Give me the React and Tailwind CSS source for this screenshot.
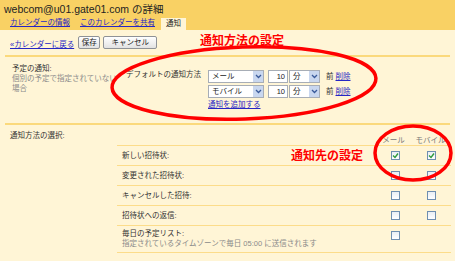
import React from 'react';

const jp = "font-['Liberation_Sans','Noto_Sans_CJK_JP',sans-serif]";

function Chevron() {
  return (
    <svg width="7" height="5" viewBox="0 0 7 5">
      <path d="M1 1 L3.5 3.5 L6 1" fill="none" stroke="#3a5a9a" strokeWidth="1.3" />
    </svg>
  );
}

function SelectBox({ value, width }) {
  return (
    <div className={`flex h-[13px] items-stretch border border-[#a7adb6] bg-white ${width}`}>
      <span className="flex-1 pl-[3px] text-[7.5px] leading-[11px] text-[#222]">{value}</span>
      <span className="flex w-[10px] items-center justify-center bg-[#c9d7ef]">
        <Chevron />
      </span>
    </div>
  );
}

function Checkbox({ checked }) {
  return (
    <div className="flex h-[9px] w-[9px] items-center justify-center border border-[#6f8fb0] bg-gradient-to-b from-[#e9eef4] to-[#ffffff]">
      {checked && (
        <svg width="7" height="7" viewBox="0 0 7 7">
          <path d="M1 3.5 L3 5.5 L6 1.5" fill="none" stroke="#2f9a3c" strokeWidth="1.4" />
        </svg>
      )}
    </div>
  );
}

const rows = [
  { label: '新しい招待状:', checked: true },
  { label: '変更された招待状:' },
  { label: 'キャンセルした招待:' },
  { label: '招待状への返信:' },
];

export default function App() {
  return (
    <div className={`relative h-[261px] w-[455px] overflow-hidden bg-[#fff5d6] text-[#333] ${jp}`}>
      {/* header */}
      <div className="h-[30px] bg-[#f9d164] pl-[4px]">
        <div className="pt-[3px] text-[10.5px] leading-[13px] text-[#222]">webcom@u01.gate01.com の詳細</div>
        <div className="mt-[2px] flex h-[12px] items-end pl-[6px] text-[7.5px]">
          <a className="mb-[2px] text-[#2626c4] underline">カレンダーの情報</a>
          <a className="mb-[2px] ml-[10px] text-[#2626c4] underline">このカレンダーを共有</a>
          <span className="ml-[6px] flex h-[12px] items-center bg-[#fff5d6] px-[5px] text-[#222]">通知</span>
        </div>
      </div>

      {/* toolbar */}
      <div className="flex h-[25px] items-center pl-[10px] text-[7.5px]">
        <a className="mt-[4px] text-[#2626c4] underline">«カレンダーに戻る</a>
        <button className="ml-[4px] h-[13px] w-[22px] rounded-[2px] border border-[#8f9296] bg-gradient-to-b from-[#ffffff] to-[#e2e2e2] text-[7.5px] leading-[11px] text-[#222]">保存</button>
        <button className="ml-[3px] h-[13px] w-[54px] rounded-[2px] border border-[#8f9296] bg-gradient-to-b from-[#ffffff] to-[#e2e2e2] text-[7.5px] leading-[11px] text-[#222]">キャンセル</button>
      </div>
      <div className="mx-[5px] h-[2px] bg-[#fbd97c]" />

      {/* default notification */}
      <div className="flex h-[66px] text-[7.5px]">
        <div className="w-[126px] whitespace-nowrap pl-[12px] pt-[6px]">
          <div className="leading-[11px] text-[#333]">予定の通知:</div>
          <div className="leading-[10px] text-[#8a8a8a]">個別の予定で指定されていない<br />場合</div>
        </div>
        <div className="w-[82px] whitespace-nowrap pt-[12px] leading-[11px] text-[#333]">デフォルトの通知方法</div>
        <div className="pt-[13px]">
          {['メール', 'モバイル'].map((v, i) => (
            <div key={v} className={`flex items-center ${i ? 'mt-[2px]' : ''}`}>
              <SelectBox value={v} width="w-[56px]" />
              <div className="ml-[4px] h-[13px] w-[20px] border border-[#a7adb6] bg-white pr-[2px] text-right text-[7.5px] leading-[11px] text-[#222]">10</div>
              <div className="ml-[1px]"><SelectBox value="分" width="w-[31px]" /></div>
              <span className="ml-[6px] text-[#333]">前</span>
              <a className="ml-[2px] text-[#2626c4] underline">削除</a>
            </div>
          ))}
          <a className="mt-[2px] block leading-[10px] text-[#2626c4] underline">通知を追加する</a>
        </div>
      </div>
      <div className="mx-[5px] h-[2px] bg-[#fbd97c]" />

      {/* notification choice */}
      <div className="flex h-[20px] text-[7.5px]">
        <div className="flex-1 pl-[10px] pt-[5px] text-[#333]">通知方法の選択:</div>
        <div className="flex pr-[6px] pt-[10px] text-[#777]">
          <span className="w-[37px] text-center">メール</span>
          <span className="w-[37px] text-center">モバイル</span>
        </div>
      </div>
      <div className="ml-[117px] mr-[4px] text-[7.5px]">
        {rows.map((r) => (
          <div key={r.label} className="flex h-[20px] items-center border-t-[1.5px] border-[#fcdc8a]">
            <span className="flex-1 pl-[5px] text-[#333]">{r.label}</span>
            <div className="flex w-[37px] justify-center"><Checkbox checked={r.checked} /></div>
            <div className="flex w-[37px] justify-center pr-[2px]"><Checkbox checked={r.checked} /></div>
          </div>
        ))}
        <div className="flex h-[28px] border-y-[1.5px] border-[#fcdc8a] pt-[3px]">
          <div className="flex-1 pl-[5px] leading-[10px]">
            <div className="text-[#333]">毎日の予定リスト:</div>
            <div className="text-[#8a8a8a]">指定されているタイムゾーンで毎日 05:00 に送信されます</div>
          </div>
          <div className="flex w-[37px] justify-center pt-[2px]"><Checkbox /></div>
          <div className="w-[37px]" />
        </div>
      </div>

      {/* annotations */}
      <div className="absolute left-[200px] top-[34px] text-[12px] font-bold leading-[14px] text-[#ff0000]">通知方法の設定</div>
      <div className="absolute left-[291px] top-[149px] text-[12px] font-bold leading-[14px] text-[#ff0000]">通知先の設定</div>
      <svg className="pointer-events-none absolute left-0 top-0" width="455" height="261">
        <ellipse cx="244" cy="83" rx="132" ry="36" fill="none" stroke="#ff0000" strokeWidth="3.5" transform="rotate(-2 244 83)" />
        <ellipse cx="413" cy="153" rx="38" ry="27" fill="none" stroke="#ff0000" strokeWidth="3.5" />
      </svg>
    </div>
  );
}
